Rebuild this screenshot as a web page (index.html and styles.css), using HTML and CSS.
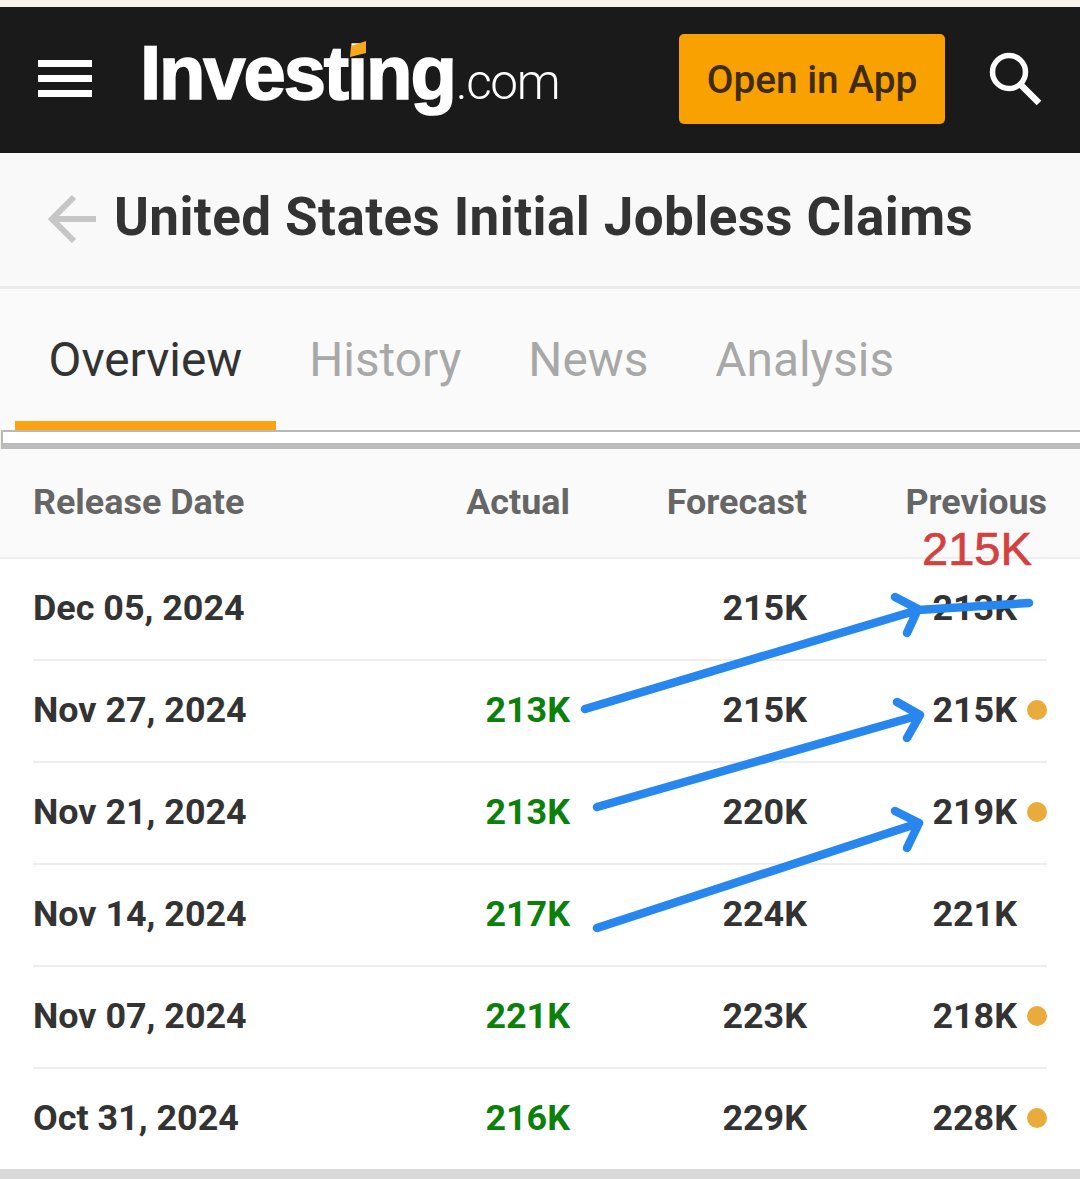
FILE: index.html
```html
<!DOCTYPE html>
<html lang="en">
<head>
<meta charset="utf-8">
<title>United States Initial Jobless Claims</title>
<link rel="stylesheet" href="styles.css">
</head>
<body>
<div class="page">
  <header class="topbar">
    <div class="burger"><span></span><span></span><span></span></div>
    <div class="logo"><span class="logo-main">Investing</span><span class="logo-com">.com</span>
      <svg class="logo-flag" viewBox="0 0 16 16"><polygon points="1,5 16,0 16,12 0,16" fill="#f6a91b"/></svg>
    </div>
    <a class="open-app">Open in App</a>
    <svg class="search" viewBox="0 0 56 56"><circle cx="22" cy="21" r="16.5" fill="none" stroke="#fff" stroke-width="5.5"/><line x1="33" y1="33" x2="52" y2="52" stroke="#fff" stroke-width="6.5"/></svg>
  </header>
  <section class="titlebar">
    <svg class="back" viewBox="0 0 50 50"><path d="M48 25H5M26 3 4 25l22 22" fill="none" stroke="#c6c6c6" stroke-width="6"/></svg>
    <h1>United States Initial Jobless Claims</h1>
  </section>
  <nav class="tabs">
    <a class="tab active">Overview</a>
    <a class="tab">History</a>
    <a class="tab">News</a>
    <a class="tab">Analysis</a>
  </nav>
  <div class="tabstrip"></div>
  <div class="thead">
    <div class="row-grid">
      <span>Release Date</span><span class="num">Actual</span><span class="num">Forecast</span><span class="num">Previous</span>
    </div>
  </div>
  <div class="tbody">
    <div class="row row-grid"><span>Dec 05, 2024</span><span class="num"></span><span class="num">215K</span><span class="prev">213K<i class="nodot"></i></span></div>
    <div class="row row-grid"><span>Nov 27, 2024</span><span class="num green">213K</span><span class="num">215K</span><span class="prev">215K<i class="dot"></i></span></div>
    <div class="row row-grid"><span>Nov 21, 2024</span><span class="num green">213K</span><span class="num">220K</span><span class="prev">219K<i class="dot"></i></span></div>
    <div class="row row-grid"><span>Nov 14, 2024</span><span class="num green">217K</span><span class="num">224K</span><span class="prev">221K<i class="nodot"></i></span></div>
    <div class="row row-grid"><span>Nov 07, 2024</span><span class="num green">221K</span><span class="num">223K</span><span class="prev">218K<i class="dot"></i></span></div>
    <div class="row row-grid"><span>Oct 31, 2024</span><span class="num green">216K</span><span class="num">229K</span><span class="prev">228K<i class="dot"></i></span></div>
  </div>
  <div class="footer-band"></div>
  <span class="note">215K</span>
  <svg class="arrows" viewBox="0 0 1080 1179">
    <g fill="none" stroke="#2787ee" stroke-width="8.5" stroke-linecap="round" stroke-linejoin="round">
      <path d="M585 709 918 610 1029 603M895 597 918 609 907 633"/>
      <path d="M597 807 920 715M897 702 920 715 907 738"/>
      <path d="M597 928 919 823M895 811 919 823 907 848"/>
    </g>
  </svg>
</div>
</body>
</html>
```
FILE: styles.css
```css
* { box-sizing: border-box; }
html, body { margin: 0; padding: 0; }
body { font-family: Roboto, "Liberation Sans", sans-serif; background: #fff; color: #333; overflow: hidden; }
.page { position: relative; width: 1080px; height: 1179px; overflow: hidden; padding-top: 7px; background: #f8f3ea; }

.topbar { display: flex; align-items: center; height: 146px; background: #1a1a1a; padding-left: 38px; }
.burger { display: flex; flex-direction: column; gap: 8px; width: 54px; margin-top: -3px; }
.burger span { display: block; height: 7px; background: #fff; }
.logo { position: relative; margin-left: 51px; display: flex; align-items: baseline; color: #fff; height: 90px; line-height: 76px; white-space: nowrap; width: 536px; }
.logo-main { font-family: "Liberation Sans", sans-serif; font-weight: 700; font-size: 76px; letter-spacing: -2.1px; margin-left: -3px; -webkit-text-stroke: 1.6px #fff; }
.logo-com { font-family: Roboto, sans-serif; font-weight: 300; font-size: 49.5px; letter-spacing: -1.4px; margin-left: 1px; }
.logo-flag { position: absolute; left: 207px; top: 6px; width: 16px; height: 16px; }
.open-app { display: flex; align-items: center; justify-content: center; width: 266px; height: 90px; background: #f8a100; border-radius: 5px; color: #3f2c10; font-size: 38.8px; font-weight: 500; margin-top: -2px; }
.search { width: 56px; height: 56px; margin-left: 42px; margin-top: -2px; }

.titlebar { display: flex; align-items: center; height: 136px; background: #f9f9f9; border-bottom: 3px solid #ececec; padding-left: 48px; }
.back { width: 50px; height: 50px; margin-top: -2px; }
.titlebar h1 { margin: -5px 0 0 16px; font-size: 53px; font-weight: 700; letter-spacing: 0.4px; color: #333; white-space: nowrap; }

.tabs { display: flex; height: 141px; background: #fafafa; padding-left: 15px; }
.tab { display: flex; align-items: center; padding: 10px 33.5px 0; height: 141px; font-size: 47.8px; color: #a8a8a8; border-bottom: 9px solid transparent; }
.tab.active { color: #333; border-bottom-color: #fca311; }

.tabstrip { height: 19px; margin-left: 1px; background: #fff; border: 2px solid #b8b8b8; border-right: 0; border-bottom: 6px solid #bcbcbc; }

.row-grid { display: grid; grid-template-columns: 1fr 200px 237px 240px; align-items: center; font-size: 35.9px; font-weight: 700; white-space: nowrap; }
.thead { height: 110px; background: #fafafa; border-bottom: 2px solid #eee; padding: 0 33px; }
.thead .row-grid { height: 106px; color: #666; }
.tbody { height: 610px; background: #fff; padding: 0 33px; }
.row { height: 102px; border-top: 2px solid #eee; padding-bottom: 2px; }
.row:first-child { border-top: 0; height: 100px; }
.num { text-align: right; }
.prev { display: flex; justify-content: flex-end; align-items: center; }
.green { color: #0b800b; }
.dot, .nodot { display: block; width: 20px; height: 20px; margin-left: 10px; border-radius: 50%; }
.dot { background: #e9ab3c; }
.footer-band { height: 10px; background: #d9d9d9; }

.note { position: absolute; left: 922px; top: 521px; font-family: "Liberation Sans", sans-serif; font-size: 47px; line-height: 56px; color: #d44040; -webkit-text-stroke: 0.7px #d44040; }
.arrows { position: absolute; left: 0; top: 0; width: 1080px; height: 1179px; pointer-events: none; }
```
